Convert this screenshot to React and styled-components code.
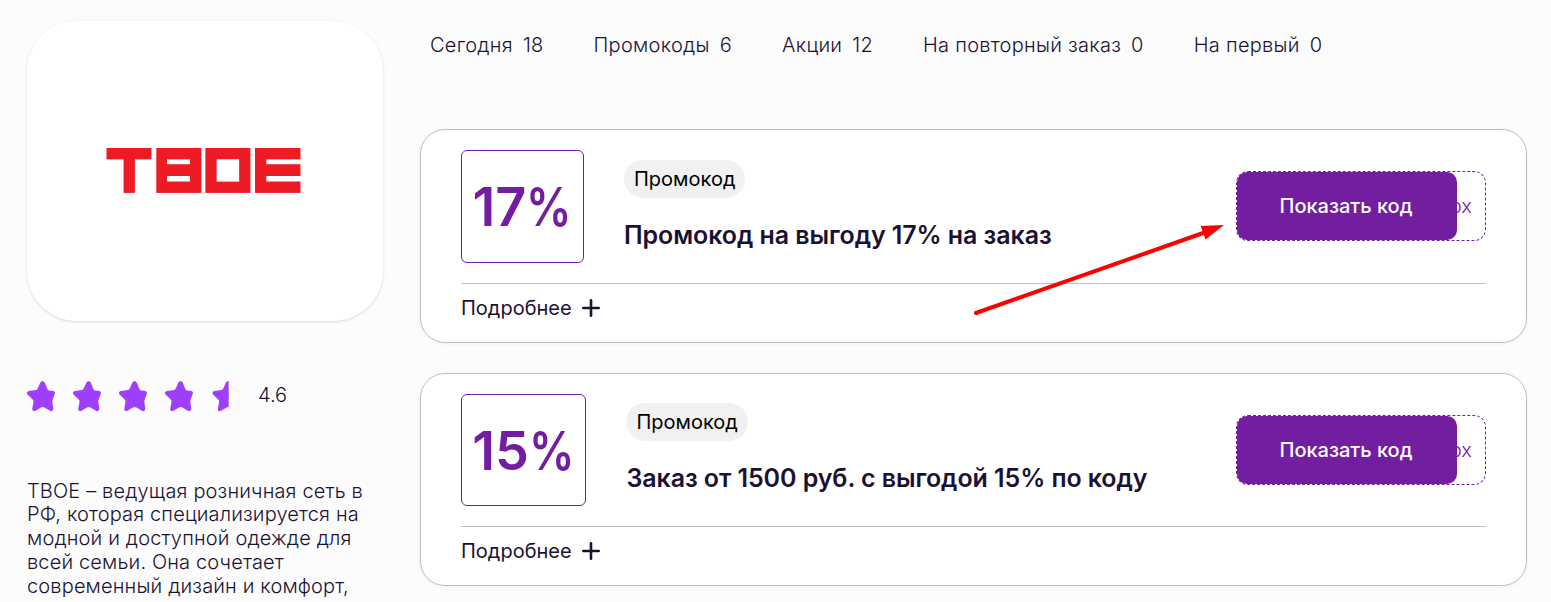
import React from 'react';
import styled, { createGlobalStyle } from 'styled-components';

const GlobalStyle = createGlobalStyle`
  *, *::before, *::after { box-sizing: border-box; }
  body {
    margin: 0;
    background: #fcfcfc;
    color: #1b1233;
    font-family: Inter, "Liberation Sans", sans-serif;
    overflow: hidden;
  }
`;

const Page = styled.div`
  position: relative;
  display: flex;
  gap: 37px;
  width: 1551px;
  height: 602px;
  padding: 0 24px 0 27px;
  overflow: hidden;
`;

const Sidebar = styled.aside`
  flex: none;
  width: 356px;
  padding-top: 21px;
`;

const LogoCard = styled.div`
  display: flex;
  align-items: center;
  justify-content: center;
  height: 300px;
  padding-right: 3px;
  border-radius: 50px;
  background: #fff;
  box-shadow: 0 1px 3px rgba(0, 0, 0, 0.14);
`;

const Rating = styled.div`
  display: flex;
  align-items: center;
  gap: 16px;
  height: 32px;
  margin: 59px 0 0 -1px;
`;

const RatingValue = styled.span`
  margin-left: 2px;
  font-size: 20px;
  font-weight: 300;
  line-height: 24px;
  transform: translateY(-1px);
`;

const Description = styled.p`
  margin: 67.5px 0 0;
  font-size: 20px;
  font-weight: 300;
  line-height: 23.9px;
  letter-spacing: 0.15px;
  white-space: nowrap;
`;

const Main = styled.main`
  flex: 1;
  min-width: 0;
`;

const Tabs = styled.nav`
  display: flex;
  gap: 50px;
  padding: 33px 0 0 10px;
  height: 129.4px;
`;

const Tab = styled.span`
  display: flex;
  gap: 10px;
  font-size: 20px;
  font-weight: 300;
  line-height: 24px;
  letter-spacing: 0.27px;
  white-space: nowrap;
`;

const CardList = styled.div`
  display: flex;
  flex-direction: column;
  gap: 30px;
`;

const Card = styled.article`
  height: 213.4px;
  padding: 20px 40px 0;
  border: 1px solid #bfbfbf;
  border-radius: 25px;
  background: #fff;
  box-shadow: 0 1px 4px rgba(0, 0, 0, 0.05);
`;

const CardTop = styled.div`
  display: flex;
  height: 133.2px;
  border-bottom: 1px solid #bfbfbf;
`;

const Discount = styled.div`
  display: flex;
  align-items: center;
  justify-content: center;
  flex: none;
  width: ${(p) => p.$width}px;
  height: 112.5px;
  border: 1px solid #731ea0;
  border-radius: 6px;
  color: #731ea0;
  font-size: 54px;
  font-weight: 600;
`;

const Percent = styled.span`
  margin-right: -8px;
  transform: scaleX(0.84);
  transform-origin: left;
`;

const Info = styled.div`
  flex: 1;
  padding: 9.5px 0 0 40px;
`;

const Badge = styled.span`
  display: inline-flex;
  align-items: center;
  height: 38px;
  padding: 0 10px;
  border-radius: 19px;
  background: #f1f1f1;
  color: #000;
  font-size: 20px;
  font-weight: 400;
`;

const Title = styled.h3`
  margin: 22px 0 0;
  font-size: 25px;
  font-weight: 600;
  line-height: 30px;
  letter-spacing: -0.08px;
  white-space: nowrap;
`;

const CodeBox = styled.div`
  position: relative;
  display: flex;
  align-items: center;
  justify-content: flex-end;
  flex: none;
  width: 250px;
  height: 70px;
  margin-top: 21px;
  padding-right: 13px;
  border: 1px dashed #731ea0;
  border-radius: 12px;
  color: #731ea0;
  font-size: 20px;
  font-weight: 300;
`;

const ShowCode = styled.button`
  position: absolute;
  inset: 0 auto 0 0;
  width: 220px;
  padding: 0 2px 0 0;
  border: 0;
  border-radius: 10px;
  background: #731ea0;
  color: #fff;
  font: 500 20px Inter, "Liberation Sans", sans-serif;
`;

const More = styled.div`
  display: flex;
  align-items: center;
  gap: 10px;
  height: 49px;
  font-size: 20px;
  font-weight: 400;
`;

const Arrow = styled.svg`
  position: absolute;
  left: 970px;
  top: 220px;
  pointer-events: none;
`;

const STAR =
  'M14.4 2.600Q16.600-.6 18.700 2.600L21.500 9.200Q22 10.400 23.400 10.500L27.600 11.100Q29.300 11.600 28.900 13.600L26.600 19.700Q26.200 21 26.400 22.400L27.300 29Q26.900 31.700 24.400 31L18.400 27.600Q16.700 26.600 15 27.600L9 31Q6 31.600 6.300 28.700L7.500 22.100Q7.700 20.600 6.700 19.600L1.500 14.400Q-.1 11.900 2.800 11.100L10 9.900Q11.200 9.600 11.700 8.500Z';

function Star({ half }) {
  return (
    <svg width="30" height="32" viewBox="0 0 30 32">
      {half ? (
        <>
          <path d={STAR} fill="none" stroke="#f4f3f5" strokeWidth="1.200" transform="translate(1.600)" />
          <svg width="18.700" height="32"><path d={STAR} fill="#a03eff" transform="translate(1.600)" /></svg>
        </>
      ) : (
        <path d={STAR} fill="#a03eff" />
      )}
    </svg>
  );
}

function BrandLogo() {
  return (
    <svg width="195" height="46" viewBox="0 0 195 46" fill="#ed1c24" role="img" aria-label="ТВОЕ">
      <rect x="0.500" y="0" width="45" height="11.400" />
      <rect x="17.600" y="0" width="11.300" height="44.900" />
      <rect x="50.300" y="0" width="45.100" height="44.900" />
      <rect x="61" y="11.400" width="23" height="4.800" fill="#fff" />
      <rect x="61" y="28" width="23" height="5.500" fill="#fff" />
      <rect x="105" y="5.650" width="33.800" height="33.600" fill="none" stroke="#ed1c24" strokeWidth="11.300" />
      <rect x="149" y="0" width="45.500" height="44.900" />
      <rect x="160.300" y="11.400" width="35" height="4.800" fill="#fff" />
      <rect x="160.300" y="28" width="35" height="5.500" fill="#fff" />
    </svg>
  );
}

function Plus() {
  return (
    <svg width="18" height="18" viewBox="0 0 18 18">
      <path d="M9 1.300v15.400M1.300 9h15.400" stroke="#1b1233" strokeWidth="2.600" strokeLinecap="round" />
    </svg>
  );
}

const tabs = [
  ['Сегодня', 18],
  ['Промокоды', 6],
  ['Акции', 12],
  ['На повторный заказ', 0],
  ['На первый', 0],
];

const offers = [
  { discount: 17, width: 123, title: 'Промокод на выгоду 17% на заказ' },
  { discount: 15, width: 125.4, title: 'Заказ от 1500 руб. с выгодой 15% по коду' },
];

export default function App() {
  return (
    <Page>
      <GlobalStyle />
      <Sidebar>
        <LogoCard><BrandLogo /></LogoCard>
        <Rating>
          <Star /><Star /><Star /><Star /><Star half />
          <RatingValue>4.6</RatingValue>
        </Rating>
        <Description>
          ТВОЕ – ведущая розничная сеть в<br />
          РФ, которая специализируется на<br />
          модной и доступной одежде для<br />
          всей семьи. Она сочетает<br />
          современный дизайн и комфорт,
        </Description>
      </Sidebar>
      <Main>
        <Tabs>
          {tabs.map(([label, count]) => (
            <Tab key={label}><span>{label}</span><span>{count}</span></Tab>
          ))}
        </Tabs>
        <CardList>
          {offers.map((o) => (
            <Card key={o.discount}>
              <CardTop>
                <Discount $width={o.width}>{o.discount}<Percent>%</Percent></Discount>
                <Info>
                  <Badge>Промокод</Badge>
                  <Title>{o.title}</Title>
                </Info>
                <CodeBox>
                  рх
                  <ShowCode>Показать код</ShowCode>
                </CodeBox>
              </CardTop>
              <More>Подробнее <Plus /></More>
            </Card>
          ))}
        </CardList>
      </Main>
      <Arrow width="260" height="100" viewBox="0 0 260 100">
        <path d="M6 93L236 12" stroke="#f00" strokeWidth="4" strokeLinecap="round" />
        <path d="M254 5L230.700 6L235.500 19.500Z" fill="#f00" />
      </Arrow>
    </Page>
  );
}
